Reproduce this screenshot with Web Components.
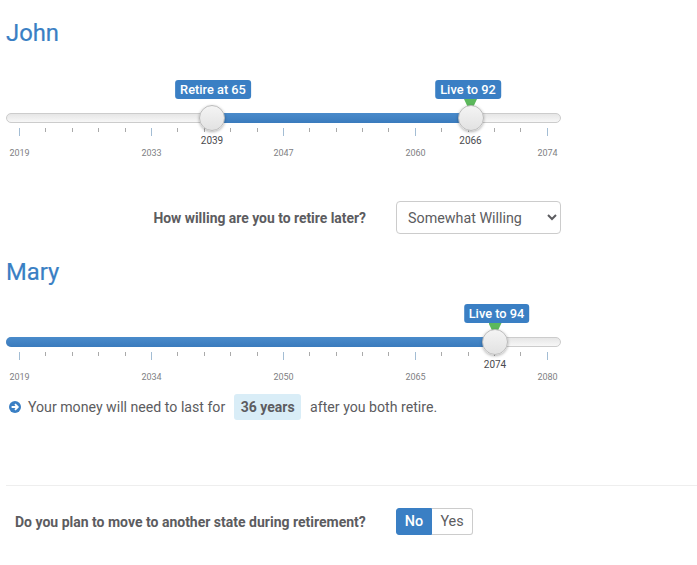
<!DOCTYPE html>
<html>
<head>
<meta charset="utf-8">
<title>Retirement</title>
<style>
  html, body { margin: 0; background: #fff; }
  body { font-family: Roboto, "Liberation Sans", sans-serif; color: #5c5c60; overflow: hidden; }
</style>
</head>
<body>
<plan-page>
  <person-heading style="margin-top:20px">John</person-heading>
  <age-slider style="margin-top:32px" fill-to="463.5" fill-start="205" labels="2019,2033,2047,2060,2074">
    <slider-handle at="205" value="2039" tip="Retire at 65" shift="1"></slider-handle>
    <slider-handle at="463.5" value="2066" tip="Live to 92" shift="-2.5" pin></slider-handle>
  </age-slider>
  <willing-row style="margin-top:42px"></willing-row>
  <person-heading style="margin-top:25px">Mary</person-heading>
  <age-slider style="margin-top:17px" fill-to="488" fill-start="-1" labels="2019,2034,2050,2065,2080">
    <slider-handle at="488" value="2074" tip="Live to 94" shift="1.5" pin></slider-handle>
  </age-slider>
  <money-note style="margin-top:11px"></money-note>
  <move-question></move-question>
</plan-page>

<script>
class PlanPage extends HTMLElement {
  constructor() {
    super()
    this.attachShadow({ mode: 'open' })
    this.shadowRoot.innerHTML = `
      <style>
        :host { display: block; padding-left: 6px; height: 565px; box-sizing: border-box; }
      </style>
      <slot></slot>
    `
  }
}

class PersonHeading extends HTMLElement {
  constructor() {
    super()
    this.attachShadow({ mode: 'open' })
    this.shadowRoot.innerHTML = `
      <style>
        :host { display: block; font-size: 23.8px; line-height: 26px; color: #3a7fc4; -webkit-text-stroke: 0.2px #3a7fc4; }
      </style>
      <slot></slot>
    `
  }
}

class AgeSlider extends HTMLElement {
  constructor() {
    super()
    this.attachShadow({ mode: 'open' })
  }

  connectedCallback() {
    const start = this.getAttribute('fill-start')
    const end = this.getAttribute('fill-to')
    const labels = this.getAttribute('labels').split(',')
    let ticks = ''
    for (let i = 0; i <= 20; i++) {
      ticks += `<i class="${i % 5 === 0 ? 'major' : 'minor'}"></i>`
    }
    this.shadowRoot.innerHTML = `
      <style>
        :host { display: block; width: 555px; padding-top: 35px; font-size: 9px; }
        .track {
          position: relative;
          height: 10px;
          box-sizing: border-box;
          border: 1px solid #ccc;
          border-radius: 5px;
          background: linear-gradient(#e6e6e6, #f7f7f7);
        }
        .fill {
          position: absolute;
          top: -1px;
          height: 10px;
          background: linear-gradient(#4a8bcb, #3a7bbd);
          border-radius: 5px 0 0 5px;
        }
        .ticks, .labels {
          display: flex;
          justify-content: space-between;
          margin: 0 13px;
        }
        .ticks { margin-top: 5px; height: 8px; }
        i { display: block; width: 1px; background: #aaa; height: 4px; }
        i.major { height: 8px; background: #a3bdd4; }
        .labels { margin-top: 11px; height: 12px; line-height: 12px; color: #808084; }
        .labels span { width: 1px; display: flex; justify-content: center; white-space: nowrap; }
      </style>
      <div class="track">
        <div class="fill" style="left:${start}px;width:${end - start}px"></div>
        <slot></slot>
      </div>
      <div class="ticks">${ticks}</div>
      <div class="labels">${labels.map(l => `<span>${l}</span>`).join('')}</div>
    `
  }
}

class SliderHandle extends HTMLElement {
  constructor() {
    super()
    this.attachShadow({ mode: 'open' })
  }

  connectedCallback() {
    const at = this.getAttribute('at')
    const shift = this.getAttribute('shift')
    const pin = this.hasAttribute('pin') ? '<div class="pin"></div>' : ''
    this.shadowRoot.innerHTML = `
      <style>
        :host { position: absolute; top: 4px; left: ${at}px; width: 0; height: 0; z-index: 2; }
        .knob {
          position: absolute;
          left: -13px;
          top: -13px;
          width: 26px;
          height: 26px;
          box-sizing: border-box;
          border: 1px solid #bbb;
          border-radius: 50%;
          background: linear-gradient(#f4f4f4, #e2e2e2);
          box-shadow: 0 1px 3px rgba(0,0,0,0.3);
        }
        .tip {
          position: absolute;
          top: -38px;
          left: ${shift}px;
          transform: translateX(-50%);
          height: 19px;
          line-height: 19px;
          padding: 0 5px;
          background: #3a7fc4;
          color: #fff;
          border-radius: 3px;
          font-size: 12.8px;
          font-weight: 500;
          white-space: nowrap;
        }
        .pin {
          position: absolute;
          top: -19px;
          left: -6.5px;
          width: 13px;
          height: 7px;
          background: #5cb85c;
          clip-path: polygon(0 0, 100% 0, 75% 100%, 25% 100%);
        }
        .value {
          position: absolute;
          top: 16px;
          left: 0;
          transform: translateX(-50%);
          font-size: 10px;
          line-height: 13px;
          color: #4a4a4e;
        }
      </style>
      ${pin}
      <div class="tip">${this.getAttribute('tip')}</div>
      <div class="knob"></div>
      <div class="value">${this.getAttribute('value')}</div>
    `
  }
}

class WillingRow extends HTMLElement {
  constructor() {
    super()
    this.attachShadow({ mode: 'open' })
    this.shadowRoot.innerHTML = `
      <style>
        :host {
          display: flex;
          align-items: center;
          justify-content: flex-end;
          gap: 30px;
          width: 555px;
          font-size: 13.9px;
        }
        label { font-weight: 700; }
        select {
          width: 165px;
          height: 33px;
          padding: 0 7px;
          font: 14.3px Roboto, "Liberation Sans", sans-serif;
          color: #5c5c60;
          background: #fff;
          border: 1px solid #ccc;
          border-radius: 4px;
        }
      </style>
      <label>How willing are you to retire later?</label>
      <select>
        <option>Somewhat Willing</option>
      </select>
    `
  }
}

class MoneyNote extends HTMLElement {
  constructor() {
    super()
    this.attachShadow({ mode: 'open' })
    this.shadowRoot.innerHTML = `
      <style>
        :host { display: flex; align-items: center; font-size: 14.15px; padding-left: 3px; height: 26px; }
        svg { width: 12px; height: 12px; margin-right: 7px; }
        .pill {
          margin: 0 9px;
          height: 26px;
          line-height: 26px;
          padding: 0 6.5px;
          background: #d9edf7;
          border-radius: 3px;
          font-weight: 700;
          font-size: 14px;
        }
      </style>
      <svg viewBox="0 0 12 12">
        <circle cx="6" cy="6" r="6" fill="#3a7fc4"/>
        <path d="M2.6 6H8.4M6 3.2L8.8 6L6 8.8" fill="none" stroke="#fff" stroke-width="1.8"/>
      </svg>
      <span>Your money will need to last for</span>
      <span class="pill">36 years</span>
      <span>after you both retire.</span>
    `
  }
}

class MoveQuestion extends HTMLElement {
  constructor() {
    super()
    this.attachShadow({ mode: 'open' })
    this.shadowRoot.innerHTML = `
      <style>
        :host {
          display: block;
          margin-top: 65px;
          border-top: 1px solid #eee;
          padding-top: 22px;
          font-size: 14px;
        }
        .row { display: flex; align-items: center; padding-left: 9px; }
        label { font-weight: 700; width: 381px; }
        .group { display: flex; height: 27px; }
        button {
          font: 14.4px Roboto, "Liberation Sans", sans-serif;
          padding: 0;
          border: 1px solid #ccc;
          background: #fff;
          color: #5c5c60;
        }
        .no { width: 36px; background: #3a7fc4; border-color: #3a7fc4; color: #fff; font-weight: 500; border-radius: 3px 0 0 3px; }
        .yes { width: 41px; border-left: 0; border-radius: 0 3px 3px 0; }
      </style>
      <div class="row">
        <label>Do you plan to move to another state during retirement?</label>
        <div class="group">
          <button class="no">No</button>
          <button class="yes">Yes</button>
        </div>
      </div>
    `
  }
}

customElements.define('plan-page', PlanPage)
customElements.define('person-heading', PersonHeading)
customElements.define('age-slider', AgeSlider)
customElements.define('slider-handle', SliderHandle)
customElements.define('willing-row', WillingRow)
customElements.define('money-note', MoneyNote)
customElements.define('move-question', MoveQuestion)
</script>
</body>
</html>
